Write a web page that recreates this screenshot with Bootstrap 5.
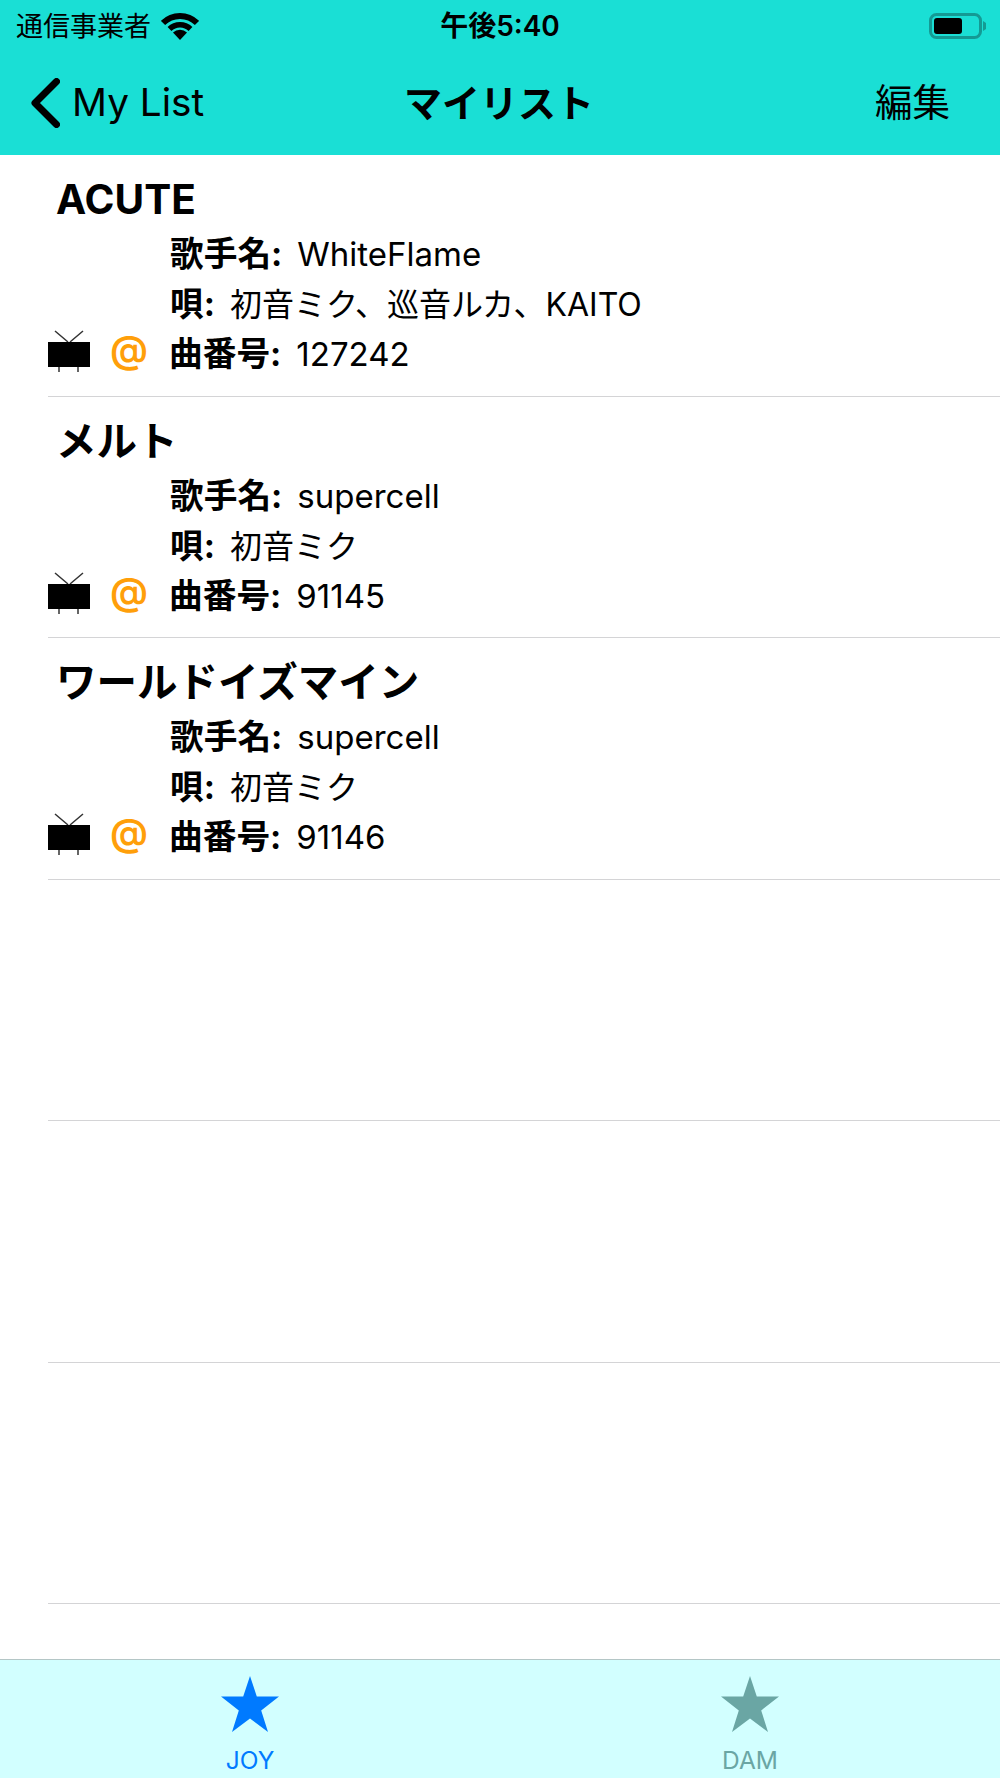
<!DOCTYPE html>
<html lang="ja">
<head>
    <meta charset="UTF-8">
    <meta name="viewport" content="width=device-width, initial-scale=1.0">
    <title>マイリスト</title>
    <link rel="stylesheet" href="https://cdn.jsdelivr.net/npm/bootstrap@5.3.0/dist/css/bootstrap.min.css">
    <style>
        body {
            font-family: Inter, "Noto Sans CJK JP", sans-serif;
            color: #000;
            height: 1778px;
            overflow: hidden;
        }
        .app-header { background: #1adfd5; height: 155px; }
        .status-bar { height: 52px; padding: 0 13px 0 16px; }
        .carrier { font-size: 27px; line-height: 1; }
        .wifi-icon { margin-left: 10px; }
        .clock { font-size: 28px; font-weight: 600; line-height: 1; margin-right: 3px; }
        .nav-line { height: 103px; padding: 0 32px 2px 30px; }
        .nav-side { flex: 1 1 0; }
        .back-label { font-size: 38.7px; margin-left: 12px; line-height: 1; }
        .nav-title { font-size: 38px; font-weight: 700; line-height: 1; }
        .edit-label { font-size: 37.5px; line-height: 1; margin-right: 18px; }
        .song-list { overflow: hidden; }
        .song-row {
            height: 241.5px;
            margin-left: 48px;
            padding-top: 19px;
            border-bottom: 1.5px solid #d4d4d6;
        }
        .song-title { font-size: 40.5px; font-weight: 700; line-height: 50px; height: 55px; padding-left: 8px; padding-top: 1px; }
        .info-line { font-size: 33px; line-height: 50px; height: 50px; padding-left: 122px; }
        .info-line b { font-weight: 700; margin-right: 15px; font-size: 33.7px; }
        .vocal-text { font-size: 32px; }
        .icon-line { padding-left: 0; }
        .tv-icon { width: 42px; height: 42px; margin-right: 21px; margin-bottom: 6px; }
        .at-mark { width: 59px; color: #ff9f0a; font-size: 38px; font-weight: 600; line-height: 1; margin-bottom: 10px; margin-left: -1px; }
        .tab-bar {
            height: 119px;
            background: #d2ffff;
            border-top: 1.5px solid #b4c6c6;
        }
        .tab-item { padding-top: 16px; }
        .tab-label { font-size: 24.5px; line-height: 1; margin-top: 16px; }
        .tab-on { color: #007aff; }
        .tab-off { color: #6aa6a4; }
    </style>
</head>
<body class="d-flex flex-column">

  <header class="app-header flex-shrink-0">
    <div class="status-bar d-flex align-items-center">
      <div class="nav-side d-flex align-items-center">
        <span class="carrier">通信事業者</span>
        <svg class="wifi-icon" width="38" height="28" viewBox="0 0 38 28">
          <path d="M2 11 A24 24 0 0 1 36 11" fill="none" stroke="#000" stroke-width="6"/>
          <path d="M8.5 17 A15 15 0 0 1 29.5 17" fill="none" stroke="#000" stroke-width="5.5"/>
          <path d="M19 28 L12 20.5 A10 10 0 0 1 26 20.5 Z" fill="#000"/>
        </svg>
      </div>
      <span class="clock">午後5:40</span>
      <div class="nav-side d-flex justify-content-end">
        <svg width="58" height="26" viewBox="0 0 58 26">
          <rect x="1.5" y="1.5" width="50" height="23" rx="6" fill="none" stroke="#149a94" stroke-width="3"/>
          <rect x="5" y="5" width="28" height="16" rx="3" fill="#000"/>
          <path d="M54 8 L57 10 V16 L54 18 Z" fill="#149a94"/>
        </svg>
      </div>
    </div>
    <div class="nav-line d-flex align-items-center">
      <div class="nav-side d-flex align-items-center">
        <svg width="30" height="50" viewBox="0 0 30 50">
          <path d="M26.5 3.5 L5 25 L26.5 46.5" fill="none" stroke="#000" stroke-width="7" stroke-linecap="round" stroke-linejoin="round"/>
        </svg>
        <span class="back-label">My List</span>
      </div>
      <span class="nav-title">マイリスト</span>
      <div class="nav-side text-end"><span class="edit-label">編集</span></div>
    </div>
  </header>

  <main class="song-list flex-grow-1" id="songList"></main>

  <footer class="tab-bar row g-0 flex-shrink-0">
    <div class="col-6 tab-item d-flex flex-column align-items-center tab-on">
      <svg width="58" height="56" viewBox="0 0 58 56"><path d="M29 0 L35.8 20.5 L58 20.5 L40.2 34.5 L47 56 L29 42.5 L11 56 L17.8 34.5 L0 20.5 L22.2 20.5 Z" fill="currentColor"/></svg>
      <span class="tab-label">JOY</span>
    </div>
    <div class="col-6 tab-item d-flex flex-column align-items-center tab-off">
      <svg width="58" height="56" viewBox="0 0 58 56"><path d="M29 0 L35.8 20.5 L58 20.5 L40.2 34.5 L47 56 L29 42.5 L11 56 L17.8 34.5 L0 20.5 L22.2 20.5 Z" fill="currentColor"/></svg>
      <span class="tab-label">DAM</span>
    </div>
  </footer>

  <script src="https://cdn.jsdelivr.net/npm/bootstrap@5.3.0/dist/js/bootstrap.bundle.min.js"></script>
  <script>
    const songs = [
      { title: "ACUTE", artist: "WhiteFlame", vocal: "初音ミク、巡音ルカ、KAITO", number: "127242" },
      { title: "メルト", artist: "supercell", vocal: "初音ミク", number: "91145" },
      { title: "ワールドイズマイン", artist: "supercell", vocal: "初音ミク", number: "91146" },
      null, null, null, null
    ];

    const tvIcon = `
      <svg class="tv-icon flex-shrink-0" viewBox="0 0 42 42">
        <path d="M7 1 L20 12 M35 1 L22 12" stroke="#333" stroke-width="1.5" fill="none"/>
        <rect x="0" y="12" width="42" height="25" fill="#000"/>
        <path d="M11 37 V42 M30 37 V42" stroke="#333" stroke-width="1.5"/>
      </svg>`;

    function createRow(song) {
      if (!song) return `<div class="song-row"></div>`;
      return `
        <div class="song-row">
          <div class="song-title">${song.title}</div>
          <div class="info-line"><b>歌手名:</b>${song.artist}</div>
          <div class="info-line"><b>唄:</b><span class="vocal-text">${song.vocal}</span></div>
          <div class="info-line icon-line d-flex align-items-center">
            ${tvIcon}
            <span class="at-mark">@</span>
            <b>曲番号:</b>${song.number}
          </div>
        </div>`;
    }

    document.getElementById("songList").innerHTML = songs.map(createRow).join("");
  </script>
</body>
</html>
